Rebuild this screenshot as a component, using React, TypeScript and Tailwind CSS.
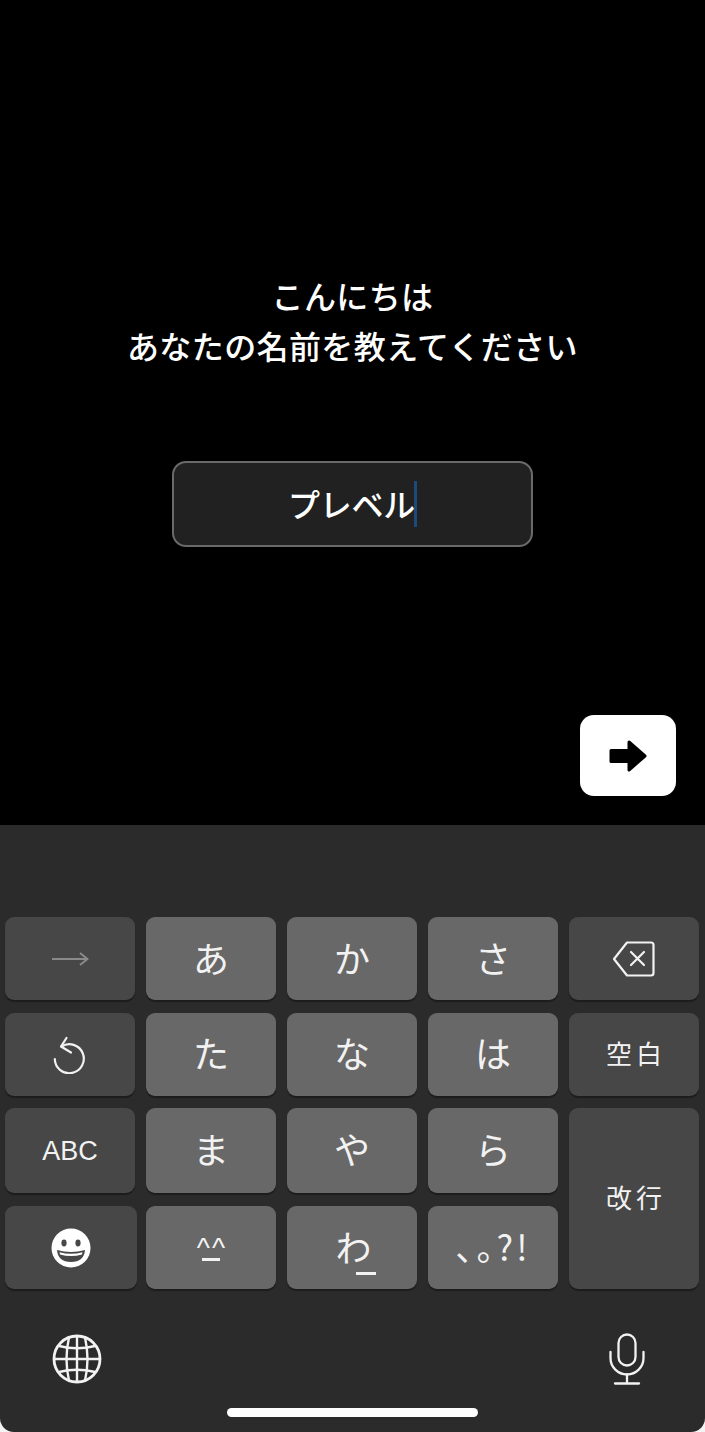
const jp = "font-['Noto_Sans_CJK_JP','Noto_Sans',sans-serif]";

const keyBase = 'flex items-center justify-center rounded-[9px] text-[#f2f2f2] shadow-[0_2px_1px_rgba(0,0,0,0.35)]';
const light = `${keyBase} bg-[#686868]`;
const dark = `${keyBase} bg-[#474747]`;

function Kana({ children }: { children: React.ReactNode }) {
  return <div className={`${light} text-[36px] leading-none pb-1`}>{children}</div>;
}

function UndoIcon() {
  return (
    <svg width="34" height="38" viewBox="0 0 34 38" fill="none" stroke="#f2f2f2" strokeWidth="2.2" strokeLinecap="round" strokeLinejoin="round">
      <path d="M8.5 10.5 A14.5 14.5 0 1 1 1.8 23" />
      <path d="M13.5 2 L8 10.5 L18 16.5" />
    </svg>
  );
}

function DeleteIcon() {
  return (
    <svg width="44" height="36" viewBox="0 0 44 36" fill="none" stroke="#f2f2f2" strokeWidth="2.2" strokeLinejoin="round" strokeLinecap="round">
      <path d="M15 1.5 H39 a2.5 2.5 0 0 1 2.5 2.5 V32 a2.5 2.5 0 0 1 -2.5 2.5 H15 L2 18 Z" />
      <path d="M19 11 L32 24 M32 11 L19 24" />
    </svg>
  );
}

function EmojiIcon() {
  return (
    <svg width="40" height="40" viewBox="0 0 40 40">
      <circle cx="20" cy="20" r="19.5" fill="#ffffff" />
      <ellipse cx="13" cy="15" rx="2.6" ry="3.4" fill="#474747" />
      <ellipse cx="27" cy="15" rx="2.6" ry="3.4" fill="#474747" />
      <path d="M6 22 Q20 26 34 22 Q33 34 20 34 Q7 34 6 22 Z" fill="#474747" />
      <path d="M8.5 24.2 Q20 27.5 31.5 24.2 L31 26.5 Q20 29.5 9 26.5 Z" fill="#ffffff" />
    </svg>
  );
}

function GlobeIcon() {
  return (
    <svg width="50" height="50" viewBox="0 0 50 50" fill="none" stroke="#f2f2f2" strokeWidth="2.4">
      <circle cx="25" cy="25" r="23" strokeWidth="2.8" />
      <path d="M25 2 V48 M2 25 H48" />
      <path d="M17 3.5 Q12 25 17 46.5 M33 3.5 Q38 25 33 46.5" />
      <path d="M7 12 Q25 16.5 43 12 M7 38 Q25 33.5 43 38" />
    </svg>
  );
}

function MicIcon() {
  return (
    <svg width="36" height="52" viewBox="0 0 36 52" fill="none" stroke="#f2f2f2" strokeWidth="2.3" strokeLinecap="round">
      <rect x="9.5" y="1.5" width="17" height="31" rx="8.5" />
      <path d="M1.5 19 V25 A16.5 16.5 0 0 0 34.5 25 V19" />
      <path d="M18 41.5 V50 M6 50.5 H30" />
    </svg>
  );
}

export default function App() {
  return (
    <div className={`w-[705px] h-[1432px] bg-[#f4f4f4] overflow-hidden ${jp}`}>
      <div className="h-[825px] bg-black flex flex-col items-center pt-[270px]">
        <h1 className="text-center text-white text-[32px] leading-[50px] font-medium tracking-[0.4px]">
          こんにちは
          <br />
          あなたの名前を教えてください
        </h1>
        <div className="mt-[91px] w-[361px] h-[86px] shrink-0 rounded-[14px] border-2 border-[#6a6a6a] bg-[#212121] flex items-center justify-center">
          <span className="text-white text-[32px] font-medium leading-none tracking-[-0.3px] -mt-[3px]">プレベル</span>
          <span className="w-[3px] h-[46px] bg-[#1d4a7c] -ml-[1px]" />
        </div>
        <button className="mt-[168px] mr-[29px] self-end w-[96px] h-[81px] shrink-0 rounded-[14px] bg-white flex items-center justify-center">
          <svg width="38" height="34" viewBox="0 0 38 34" fill="#000000" stroke="#000000" strokeWidth="3" strokeLinejoin="round">
            <path d="M2 11.5 H20 V3 L36 17 L20 31 V22.5 H2 Z" />
          </svg>
        </button>
      </div>

      <div className="h-[607px] bg-[#2b2b2b] rounded-b-[14px] flex flex-col pt-[92px]">
        <div className="pl-[5px] pr-[6px] grid grid-cols-[130px_130px_130px_130px_130px] grid-rows-[83px_83px_85px_83px] gap-x-[11px]">
          <div className={dark}>
            <svg width="38" height="16" viewBox="0 0 38 16" fill="none" stroke="#8a8a8a" strokeWidth="2">
              <path d="M1 8 H36 M29 2 L36.5 8 L29 14" />
            </svg>
          </div>
          <Kana>あ</Kana>
          <Kana>か</Kana>
          <Kana>さ</Kana>
          <div className={dark}>
            <DeleteIcon />
          </div>

          <div className={`${dark} mt-[13px] -mb-[13px]`}>
            <UndoIcon />
          </div>
          <div className={`${light} text-[36px] leading-none pb-1.5 mt-[13px] -mb-[13px]`}>た</div>
          <div className={`${light} text-[36px] leading-none pb-1.5 mt-[13px] -mb-[13px]`}>な</div>
          <div className={`${light} text-[36px] leading-none pb-1.5 mt-[13px] -mb-[13px]`}>は</div>
          <div className={`${dark} mt-[13px] -mb-[13px] text-[26px] tracking-[4px] pl-1 pb-1`}>空白</div>

          <div className={`${dark} mt-[25px] -mb-[25px] text-[27px] pt-[2px] font-['Liberation_Sans',sans-serif]`}>ABC</div>
          <div className={`${light} text-[36px] leading-none pb-1.5 mt-[25px] -mb-[25px]`}>ま</div>
          <div className={`${light} text-[36px] leading-none pb-1.5 mt-[25px] -mb-[25px]`}>や</div>
          <div className={`${light} text-[36px] leading-none pb-1.5 mt-[25px] -mb-[25px]`}>ら</div>
          <div className={`${dark} row-span-2 mt-[25px] -mb-[38px] text-[26px] tracking-[4px] pl-1 pb-1`}>改行</div>

          <div className={`${dark} mt-[38px] -mb-[38px] w-[132px]`}>
            <EmojiIcon />
          </div>
          <div className={`${light} mt-[38px] -mb-[38px] flex-col leading-none`}>
            <span className="font-['Liberation_Sans',sans-serif] h-[20px] text-[28px] leading-[26px] tracking-[2px] pl-[2px]">^^</span>
            <span className="w-[18px] h-[3px] bg-[#f2f2f2] mt-[3px]" />
          </div>
          <div className={`${light} mt-[38px] -mb-[38px] text-[36px] leading-none pb-1`}>
            <span className="relative ml-[3px]">
              わ
              <span className="absolute left-[21px] top-[44px] w-[20px] h-[3px] bg-[#f2f2f2]" />
            </span>
          </div>
          <div className={`${light} mt-[38px] -mb-[38px] text-[35px] leading-none pb-1 tracking-[3px] [font-feature-settings:'palt']`}>
            、。?!
          </div>
        </div>

        <div className="mt-[82px] pl-[52px] pr-[60px] flex items-center justify-between">
          <GlobeIcon />
          <MicIcon />
        </div>
        <div className="mt-[23px] self-center w-[251px] h-[9px] rounded-full bg-white" />
      </div>
    </div>
  );
}
